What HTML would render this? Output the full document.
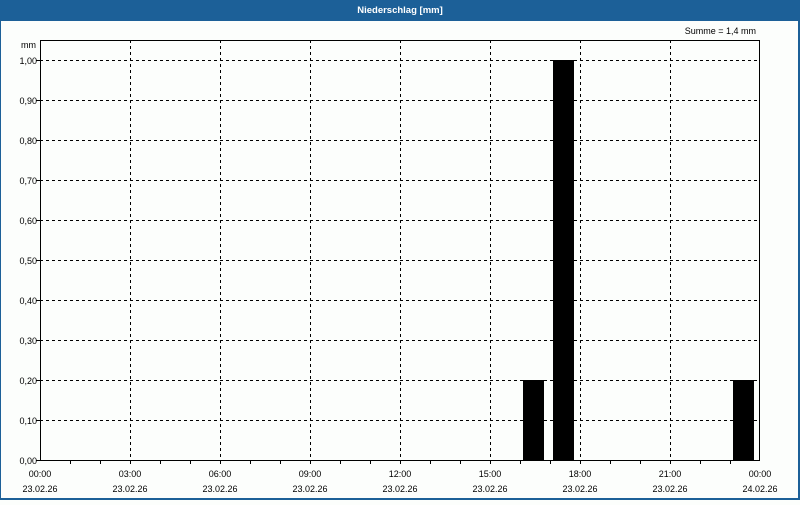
<!DOCTYPE html>
<html><head><style>
body{margin:0;width:800px;height:500px;overflow:hidden;background:#fcfefc;font-family:"Liberation Sans",sans-serif}
</style></head><body>
<svg width="800" height="500" xmlns="http://www.w3.org/2000/svg" font-family="Liberation Sans, sans-serif" font-size="9" fill="#000">
<rect x="0" y="0" width="800" height="500" fill="#1c6098"/>
<rect x="1" y="21" width="797" height="477" fill="#fcfefc"/>
<text x="400" y="13" text-anchor="middle" fill="#fff" font-weight="bold" font-size="9.5">Niederschlag [mm]</text>
<text x="756" y="34" text-anchor="end">Summe = 1,4 mm</text>
<text x="36" y="48" text-anchor="end">mm</text>
<g stroke="#000" stroke-dasharray="3,3" stroke-width="1">
<line x1="40" y1="60.5" x2="760" y2="60.5"/><line x1="40" y1="100.5" x2="760" y2="100.5"/><line x1="40" y1="140.5" x2="760" y2="140.5"/><line x1="40" y1="180.5" x2="760" y2="180.5"/><line x1="40" y1="220.5" x2="760" y2="220.5"/><line x1="40" y1="260.5" x2="760" y2="260.5"/><line x1="40" y1="300.5" x2="760" y2="300.5"/><line x1="40" y1="340.5" x2="760" y2="340.5"/><line x1="40" y1="380.5" x2="760" y2="380.5"/><line x1="40" y1="420.5" x2="760" y2="420.5"/>
<line x1="130.5" y1="40" x2="130.5" y2="460"/><line x1="220.5" y1="40" x2="220.5" y2="460"/><line x1="310.5" y1="40" x2="310.5" y2="460"/><line x1="400.5" y1="40" x2="400.5" y2="460"/><line x1="490.5" y1="40" x2="490.5" y2="460"/><line x1="580.5" y1="40" x2="580.5" y2="460"/><line x1="670.5" y1="40" x2="670.5" y2="460"/>
</g>
<rect x="523" y="380" width="21" height="80"/>
<rect x="553" y="60" width="21" height="400"/>
<rect x="733" y="380" width="21" height="80"/>
<rect x="40.5" y="40.5" width="719" height="420" fill="none" stroke="#000"/>
<g stroke="#000"><line x1="36" y1="60.5" x2="40" y2="60.5"/><line x1="36" y1="100.5" x2="40" y2="100.5"/><line x1="36" y1="140.5" x2="40" y2="140.5"/><line x1="36" y1="180.5" x2="40" y2="180.5"/><line x1="36" y1="220.5" x2="40" y2="220.5"/><line x1="36" y1="260.5" x2="40" y2="260.5"/><line x1="36" y1="300.5" x2="40" y2="300.5"/><line x1="36" y1="340.5" x2="40" y2="340.5"/><line x1="36" y1="380.5" x2="40" y2="380.5"/><line x1="36" y1="420.5" x2="40" y2="420.5"/><line x1="36" y1="460.5" x2="40" y2="460.5"/>
<line x1="70.5" y1="460" x2="70.5" y2="464"/><line x1="100.5" y1="460" x2="100.5" y2="464"/><line x1="130.5" y1="460" x2="130.5" y2="464"/><line x1="160.5" y1="460" x2="160.5" y2="464"/><line x1="190.5" y1="460" x2="190.5" y2="464"/><line x1="220.5" y1="460" x2="220.5" y2="464"/><line x1="250.5" y1="460" x2="250.5" y2="464"/><line x1="280.5" y1="460" x2="280.5" y2="464"/><line x1="310.5" y1="460" x2="310.5" y2="464"/><line x1="340.5" y1="460" x2="340.5" y2="464"/><line x1="370.5" y1="460" x2="370.5" y2="464"/><line x1="400.5" y1="460" x2="400.5" y2="464"/><line x1="430.5" y1="460" x2="430.5" y2="464"/><line x1="460.5" y1="460" x2="460.5" y2="464"/><line x1="490.5" y1="460" x2="490.5" y2="464"/><line x1="520.5" y1="460" x2="520.5" y2="464"/><line x1="550.5" y1="460" x2="550.5" y2="464"/><line x1="580.5" y1="460" x2="580.5" y2="464"/><line x1="610.5" y1="460" x2="610.5" y2="464"/><line x1="640.5" y1="460" x2="640.5" y2="464"/><line x1="670.5" y1="460" x2="670.5" y2="464"/><line x1="700.5" y1="460" x2="700.5" y2="464"/><line x1="730.5" y1="460" x2="730.5" y2="464"/></g>
<g text-anchor="end"><text x="37" y="64">1,00</text><text x="37" y="104">0,90</text><text x="37" y="144">0,80</text><text x="37" y="184">0,70</text><text x="37" y="224">0,60</text><text x="37" y="264">0,50</text><text x="37" y="304">0,40</text><text x="37" y="344">0,30</text><text x="37" y="384">0,20</text><text x="37" y="424">0,10</text><text x="37" y="464">0,00</text></g>
<g text-anchor="middle">
<text x="40" y="477">00:00</text><text x="40" y="492">23.02.26</text>
<text x="130" y="477">03:00</text><text x="130" y="492">23.02.26</text>
<text x="220" y="477">06:00</text><text x="220" y="492">23.02.26</text>
<text x="310" y="477">09:00</text><text x="310" y="492">23.02.26</text>
<text x="400" y="477">12:00</text><text x="400" y="492">23.02.26</text>
<text x="490" y="477">15:00</text><text x="490" y="492">23.02.26</text>
<text x="580" y="477">18:00</text><text x="580" y="492">23.02.26</text>
<text x="670" y="477">21:00</text><text x="670" y="492">23.02.26</text>
<text x="760" y="477">00:00</text><text x="760" y="492">24.02.26</text>
</g>
</svg>
</body></html>
